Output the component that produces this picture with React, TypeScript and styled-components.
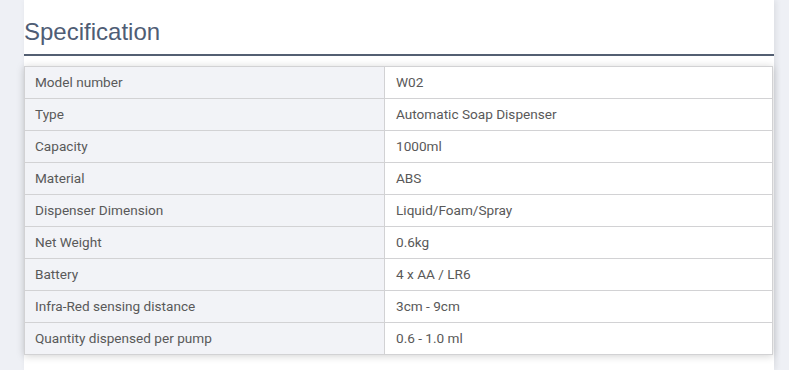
import React from "react";
import styled, { createGlobalStyle } from "styled-components";

const GlobalStyle = createGlobalStyle`
  html, body {
    margin: 0;
    padding: 0;
    background: #eef0f5;
  }
`;

const Page = styled.div`
  width: 789px;
  height: 370px;
  overflow: hidden;
`;

const Panel = styled.section`
  margin-left: 24px;
  width: 750px;
  height: 370px;
  background: #ffffff;
  box-shadow: 2px 0 6px rgba(0, 0, 0, 0.08);
  padding-top: 16px;
  box-sizing: border-box;
`;

const Title = styled.h2`
  margin: 0;
  font-family: "Liberation Sans", Arial, sans-serif;
  font-weight: 400;
  font-size: 24px;
  line-height: 32px;
  color: #4f5d75;
  padding-bottom: 6px;
  border-bottom: 2px solid #535f72;
`;

const SpecTable = styled.table`
  margin-top: 10px;
  width: 749px;
  border-collapse: collapse;
  box-shadow: 0 1px 8px rgba(0, 0, 0, 0.18);
  font-family: Roboto, "Liberation Sans", sans-serif;
  font-size: 13.6px;
  line-height: 16px;
  color: #595959;
`;

const Cell = styled.td<{ $label?: boolean }>`
  height: 32px;
  padding: 0 0 2px ${(p) => (p.$label ? "10px" : "11px")};
  border: 1px solid #d2d2d4;
  background: ${(p) => (p.$label ? "#f2f3f7" : "#ffffff")};
  width: ${(p) => (p.$label ? "360px" : "auto")};
  vertical-align: middle;
  box-sizing: border-box;
`;

const specs: [string, string][] = [
  ["Model number", "W02"],
  ["Type", "Automatic Soap Dispenser"],
  ["Capacity", "1000ml"],
  ["Material", "ABS"],
  ["Dispenser Dimension", "Liquid/Foam/Spray"],
  ["Net Weight", "0.6kg"],
  ["Battery", "4 x AA / LR6"],
  ["Infra-Red sensing distance", "3cm - 9cm"],
  ["Quantity dispensed per pump", "0.6 - 1.0 ml"],
];

const App = () => {
  return (
    <Page>
      <GlobalStyle />
      <Panel>
        <Title>Specification</Title>
        <SpecTable>
          <tbody>
            {specs.map(([label, value]) => (
              <tr key={label}>
                <Cell $label>{label}</Cell>
                <Cell>{value}</Cell>
              </tr>
            ))}
          </tbody>
        </SpecTable>
      </Panel>
    </Page>
  );
};

export default App;
